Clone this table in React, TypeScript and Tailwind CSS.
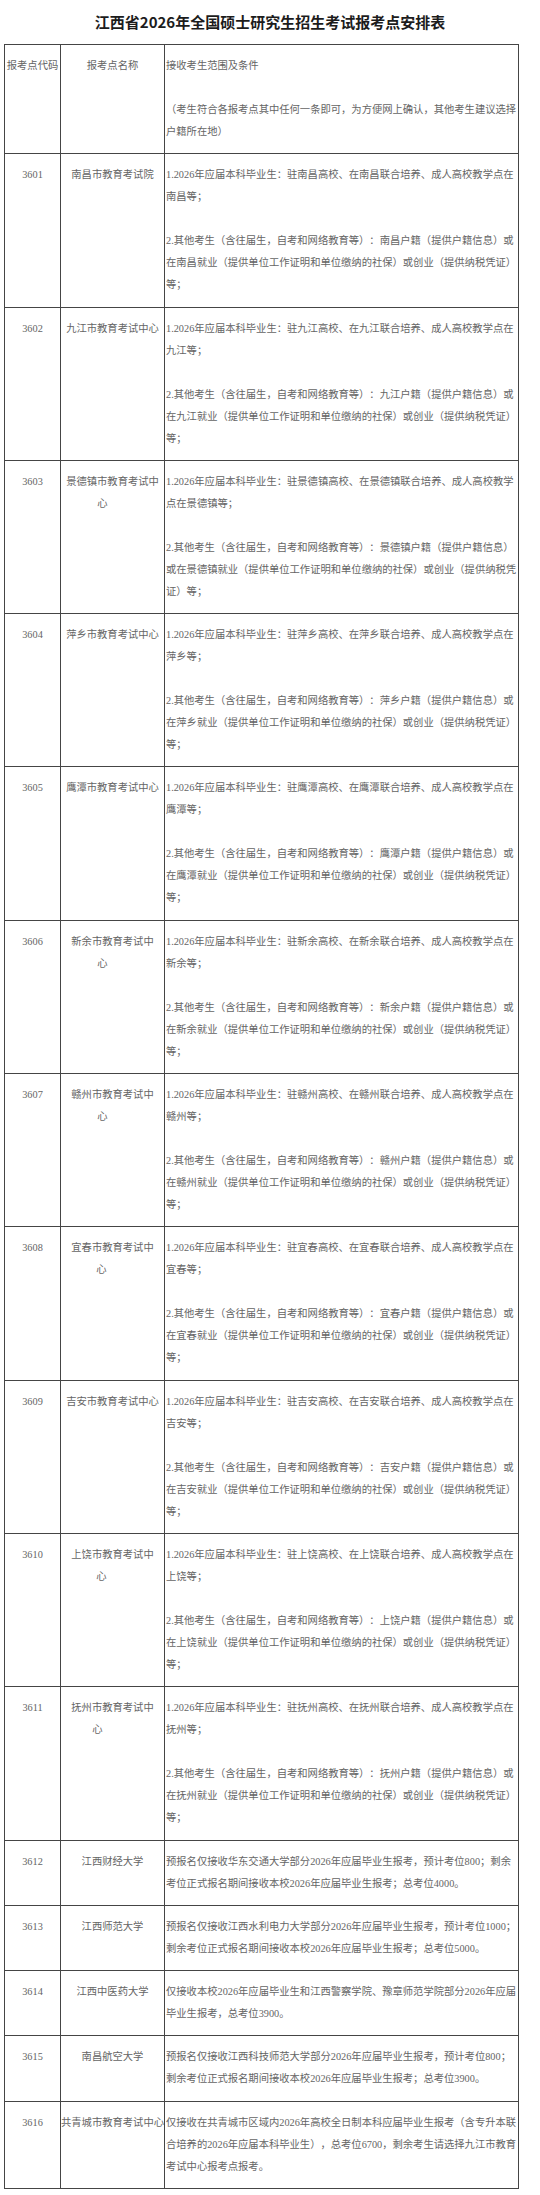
import React from 'react';

type Site = {
  code: string;
  name: string[];
  // extra right padding on the wrapped last line of the name
  tail?: string;
  city?: string;
  text?: string;
};

const sites: Site[] = [
  { code: '3601', name: ['南昌市教育考试院'], city: '南昌' },
  { code: '3602', name: ['九江市教育考试中心'], city: '九江' },
  { code: '3603', name: ['景德镇市教育考试中', '心'], tail: 'pr-5', city: '景德镇' },
  { code: '3604', name: ['萍乡市教育考试中心'], city: '萍乡' },
  { code: '3605', name: ['鹰潭市教育考试中心'], city: '鹰潭' },
  { code: '3606', name: ['新余市教育考试中', '心'], tail: 'pr-5', city: '新余' },
  { code: '3607', name: ['赣州市教育考试中', '心'], tail: 'pr-5', city: '赣州' },
  { code: '3608', name: ['宜春市教育考试中', '心'], tail: 'pr-[22px]', city: '宜春' },
  { code: '3609', name: ['吉安市教育考试中心'], city: '吉安' },
  { code: '3610', name: ['上饶市教育考试中', '心'], tail: 'pr-[22px]', city: '上饶' },
  { code: '3611', name: ['抚州市教育考试中', '心'], tail: 'pr-[30px]', city: '抚州' },
  {
    code: '3612',
    name: ['江西财经大学'],
    text: '预报名仅接收华东交通大学部分2026年应届毕业生报考，预计考位800；剩余考位正式报名期间接收本校2026年应届毕业生报考；总考位4000。',
  },
  {
    code: '3613',
    name: ['江西师范大学'],
    text: '预报名仅接收江西水利电力大学部分2026年应届毕业生报考，预计考位1000；剩余考位正式报名期间接收本校2026年应届毕业生报考；总考位5000。',
  },
  {
    code: '3614',
    name: ['江西中医药大学'],
    text: '仅接收本校2026年应届毕业生和江西警察学院、豫章师范学院部分2026年应届毕业生报考，总考位3900。',
  },
  {
    code: '3615',
    name: ['南昌航空大学'],
    text: '预报名仅接收江西科技师范大学部分2026年应届毕业生报考，预计考位800；剩余考位正式报名期间接收本校2026年应届毕业生报考；总考位3900。',
  },
  {
    code: '3616',
    name: ['共青城市教育考试中心'],
    text: '仅接收在共青城市区域内2026年高校全日制本科应届毕业生报考（含专升本联合培养的2026年应届本科毕业生），总考位6700，剩余考生请选择九江市教育考试中心报考点报考。',
  },
];

const cell = 'pt-[10px] pb-[10.3px] leading-[22px]';

const Row: React.FC<{ first?: boolean; c1: React.ReactNode; c2: React.ReactNode; c3: React.ReactNode }> = ({
  first,
  c1,
  c2,
  c3,
}) => (
  <div className={`grid grid-cols-[56px_104px_1fr] ${first ? '' : 'border-t border-[#454545]'}`}>
    <div className={`${cell} border-r border-[#454545] text-center`}>{c1}</div>
    <div className={`${cell} border-r border-[#454545] text-center`}>{c2}</div>
    <div className={`${cell} pl-[1px] text-left`}>{c3}</div>
  </div>
);

export default function App() {
  return (
    <div className="w-[540px] min-h-[2195px] bg-white font-['Liberation_Serif','Noto_Sans_CJK_SC',serif] text-[#656565] [text-autospace:no-autospace] [text-spacing-trim:space-all]">
      <div className="flex h-[44px] items-center justify-center">
        <h1 className="font-['Noto_Sans_CJK_SC',sans-serif] text-[15px] font-bold text-[#1c1c1c]">
          江西省2026年全国硕士研究生招生考试报考点安排表
        </h1>
      </div>

      <div className="ml-[4px] w-[515px] border border-[#454545] text-[10.3px]">
        <Row
          first
          c1="报考点代码"
          c2="报考点名称"
          c3={
            <>
              <p>接收考生范围及条件</p>
              <p className="mt-[22px]">
                （考生符合各报考点其中任何一条即可，为方便网上确认，其他考生建议选择户籍所在地）
              </p>
            </>
          }
        />

        {sites.map(s => (
          <Row
            key={s.code}
            c1={s.code}
            c2={s.name.map((line, i) => (
              <div
                key={i}
                className={`whitespace-nowrap ${i > 0 && s.tail ? s.tail : ''}`}
              >
                {line}
              </div>
            ))}
            c3={
              s.city ? (
                <>
                  <p>
                    1.2026年应届本科毕业生：驻{s.city}高校、在{s.city}联合培养、成人高校教学点在{s.city}等；
                  </p>
                  <p className="mt-[22px]">
                    2.其他考生（含往届生，自考和网络教育等）：{s.city}户籍（提供户籍信息）或在{s.city}
                    就业（提供单位工作证明和单位缴纳的社保）或创业（提供纳税凭证）等；
                  </p>
                </>
              ) : (
                <p>{s.text}</p>
              )
            }
          />
        ))}
      </div>
    </div>
  );
}
